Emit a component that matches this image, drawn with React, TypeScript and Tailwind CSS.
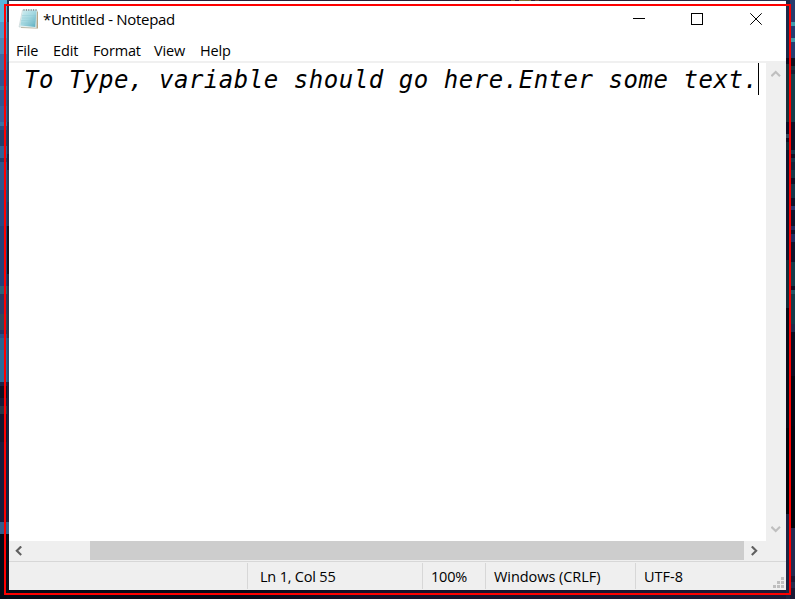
import React from "react";

type Band = [height: number, color: string];

const leftOuter: Band[] = [
  [22, "#58b5da"], [16, "#5098c8"], [16, "#4d86b5"], [16, "#416aa0"], [16, "#35528f"], [4, "#346f9a"],
  [16, "#34558f"], [16, "#3a5f9a"], [4, "#3b73a5"], [4, "#2b4f83"], [16, "#253f6b"], [12, "#336295"],
  [4, "#24406b"], [28, "#30588c"], [36, "#2a4883"], [60, "#264078"], [8, "#2d6378"], [6, "#2b3a60"],
  [14, "#303d68"], [16, "#34495c"], [4, "#263565"], [4, "#2a5088"], [12, "#2b6490"], [32, "#2a6d9a"],
  [4, "#1d2346"], [12, "#101023"], [8, "#171b38"], [8, "#263746"], [28, "#14162e"], [80, "#1a1b3c"],
  [12, "#335d8c"], [65, "#040a17"],
];
const leftInner: Band[] = [
  [22, "#25344e"], [40, "#2c5774"], [38, "#2b4a6c"], [22, "#27455f"], [32, "#1f3551"], [16, "#172642"],
  [32, "#24455e"], [24, "#203956"], [48, "#061220"], [12, "#172e4b"], [52, "#263b50"], [44, "#22567a"],
  [140, "#18223f"], [12, "#33658b"], [65, "#060d18"],
];
const rightInner: Band[] = [
  [58, "#1c2947"], [6, "#101024"], [58, "#1b3039"], [12, "#0d1027"], [4, "#34475a"], [4, "#101327"],
  [8, "#152d38"], [110, "#11152c"], [48, "#152d39"], [120, "#090d19"], [86, "#05070e"], [85, "#1d2441"],
];
const rightOuter: Band[] = [
  [22, "#293c6d"], [4, "#429bac"], [12, "#263c71"], [4, "#429bac"], [16, "#273d70"], [8, "#11101f"],
  [4, "#193541"], [4, "#171e34"], [48, "#183d4a"], [28, "#101128"], [4, "#17364a"], [4, "#111128"],
  [4, "#17364a"], [8, "#14233a"], [8, "#183949"], [6, "#111128"], [14, "#17364a"], [8, "#11132c"],
  [4, "#2a3b73"], [16, "#11132c"], [4, "#222e61"], [4, "#11132c"], [8, "#222e61"], [20, "#11132c"],
  [24, "#173b4a"], [4, "#101128"], [4, "#255565"], [30, "#173b4a"], [8, "#202b4b"], [8, "#0b0d20"],
  [36, "#0d0b20"], [50, "#060412"], [60, "#05030f"], [42, "#04030c"], [48, "#25294f"], [6, "#1c1835"],
  [6, "#272b4d"], [13, "#1c1835"],
];

function Strip({ bands, className }: { bands: Band[]; className: string }) {
  return (
    <div className={`flex h-full flex-col overflow-hidden ${className}`}>
      {bands.map(([height, backgroundColor], i) => (
        <div key={i} className="w-full shrink-0" style={{ height, backgroundColor }} />
      ))}
    </div>
  );
}

function NotepadIcon() {
  return (
    <svg className="mt-[7px] h-[22px] w-[22px] shrink-0" viewBox="0 0 22 22">
      <defs>
        <linearGradient id="page" x1="0" y1="0" x2="1" y2="1">
          <stop offset="0" stopColor="#d5eff2" />
          <stop offset=".5" stopColor="#a3d7e0" />
          <stop offset="1" stopColor="#5aacbe" />
        </linearGradient>
      </defs>
      <path d="M5 3 20 3.5V20.5L3 20Z" fill="#b8a27e" />
      <path d="M4.5 2H19L18.5 20 1 19Z" fill="#e9f3f2" stroke="#b5c6c8" strokeWidth=".5" />
      <path d="M5 2.5H18.5L17.3 19 2.2 17.5Z" fill="url(#page)" />
      <path d="M4 7.5H18M3.7 10H17.8M3.2 12.5H17.5M2.8 15H17.2" stroke="#8dc8d2" strokeWidth=".4" />
      <path d="M6 3V1M8.4 3V1M10.8 3V1M13.2 3V1M15.6 3V1M18 3V1" stroke="#85959a" strokeWidth="1" />
    </svg>
  );
}

function Chevron({ d, color, className }: { d: string; color: string; className: string }) {
  return (
    <svg className={`shrink-0 ${className}`} viewBox="0 0 10 10" fill="none" stroke={color} strokeWidth="2.1">
      <path d={d} />
    </svg>
  );
}

function TitleBar() {
  return (
    <header className="flex h-[36px] shrink-0 pl-[9px]">
      <NotepadIcon />
      <h1 className="ml-[3px] w-[580px] pt-[8px] text-[15px] leading-5 tracking-[-0.3px] whitespace-pre">*Untitled - Notepad</h1>
      <div className="mt-[12px] ml-[10px] flex">
        <svg className="h-[12px] w-[130px]" viewBox="0 0 130 12" fill="none" stroke="#000" strokeWidth="1">
          <path d="M0 5.5H12" shapeRendering="crispEdges" />
          <path d="M58.5.5H69.5V11.5H58.5Z" shapeRendering="crispEdges" />
          <path d="M117.3 .3 128.7 11.7M128.7 .3 117.3 11.7" />
        </svg>
      </div>
    </header>
  );
}

function MenuBar() {
  return (
    <nav className="flex h-[24px] shrink-0 pt-[4px] pl-[7px] text-[14.5px] leading-5 tracking-[-0.15px] whitespace-pre">
      <span className="w-[37px]">File</span>
      <span className="w-[40px]">Edit</span>
      <span className="w-[61px]">Format</span>
      <span className="w-[46px]">View</span>
      <span>Help</span>
    </nav>
  );
}

function StatusBar() {
  return (
    <footer className="flex h-[29px] shrink-0 border-t border-[#d7d7d7] bg-[#efefef] pt-px text-[14.5px] leading-[27px] tracking-[-0.2px] whitespace-pre">
      <div className="h-[26px] w-[239px] border-r border-[#d7d7d7]" />
      <div className="h-[26px] w-[175px] border-r border-[#d7d7d7] pl-[12px]">Ln 1, Col 55</div>
      <div className="h-[26px] w-[63px] border-r border-[#d7d7d7] pl-[8px]">100%</div>
      <div className="h-[26px] w-[150px] border-r border-[#d7d7d7] pl-[8px] tracking-[-0.05px]">Windows (CRLF)</div>
      <div className="h-[26px] w-[137px] pl-[8px] tracking-[0px]">UTF-8</div>
      <svg className="mt-[14px] h-[11px] w-[11px]" viewBox="0 0 11 11" fill="#bfbfbf" shapeRendering="crispEdges">
        <path d="M8 0h3v3H8zM4 4h3v3H4zM8 4h3v3H8zM0 8h3v3H0zM4 8h3v3H4zM8 8h3v3H8z" />
      </svg>
    </footer>
  );
}

export default function App() {
  return (
    <div className="relative flex h-[599px] w-[795px] overflow-hidden bg-[#25233d] font-['Open_Sans','Noto_Sans',sans-serif] text-black">
      <Strip bands={leftOuter} className="w-[7px]" />
      <Strip bands={leftInner} className="w-[2px]" />
      <div className="flex h-full w-[777px] flex-col">
        <div className="flex h-px shrink-0 bg-[linear-gradient(90deg,#263447,#292039_20%,#2b1d30_75%,#2a3452)] pl-[502px]">
          <div className="w-[4px] bg-[#6d6238]" />
          <div className="ml-[4px] w-[12px] bg-[#7d7434]" />
          <div className="ml-[4px] w-[4px] bg-[#6b4632]" />
        </div>
        <main className="flex h-[589px] flex-col bg-white">
          <TitleBar />
          <MenuBar />
          <section className="flex h-[480px] shrink-0">
            <div className="w-[757px] border-t-2 border-[#f0f0f0] pl-[15px]">
              <div className="flex h-[32px] w-[742px]">
                <p className="w-[734px] font-['DejaVu_Sans_Mono','Liberation_Mono',monospace] text-[24px] leading-[34px] tracking-[0.54px] whitespace-pre italic">To Type, variable should go here.Enter some text.</p>
                <span className="h-[32px] w-px bg-black" />
              </div>
            </div>
            <div className="flex w-[20px] flex-col items-center justify-between bg-[#efefef] pt-[8px] pb-[7px]">
              <Chevron d="M.4 7.2 4.7 3 9 7.2" color="#bfbfbf" className="h-[10px] w-[10px]" />
              <Chevron d="M.4 2.8 4.7 7 9 2.8" color="#bfbfbf" className="h-[10px] w-[10px]" />
            </div>
          </section>
          <div className="flex h-[20px] shrink-0 bg-[#efefef]">
            <div className="w-[81px] pt-[5px] pl-[5px]">
              <Chevron d="M7.2.4 2.8 4.7 7.2 9" color="#606060" className="h-[10px] w-[10px]" />
            </div>
            <div className="h-[19px] w-[654px] bg-[#cdcdcd]" />
            <div className="w-[42px] pt-[5px] pl-[5px]">
              <Chevron d="M2.8.4 7.2 4.7 2.8 9" color="#606060" className="h-[10px] w-[10px]" />
            </div>
          </div>
          <StatusBar />
        </main>
        <div className="h-[9px] bg-[linear-gradient(90deg,#050b18,#070a19_30%,#15112a_45%,#1c1b38)]" />
      </div>
      <Strip bands={rightInner} className="w-[4px]" />
      <Strip bands={rightOuter} className="w-[5px]" />
      <div className="pointer-events-none absolute top-[4px] left-[4px] h-[591px] w-[787px] border-2 border-[#fe0000]" />
    </div>
  );
}
